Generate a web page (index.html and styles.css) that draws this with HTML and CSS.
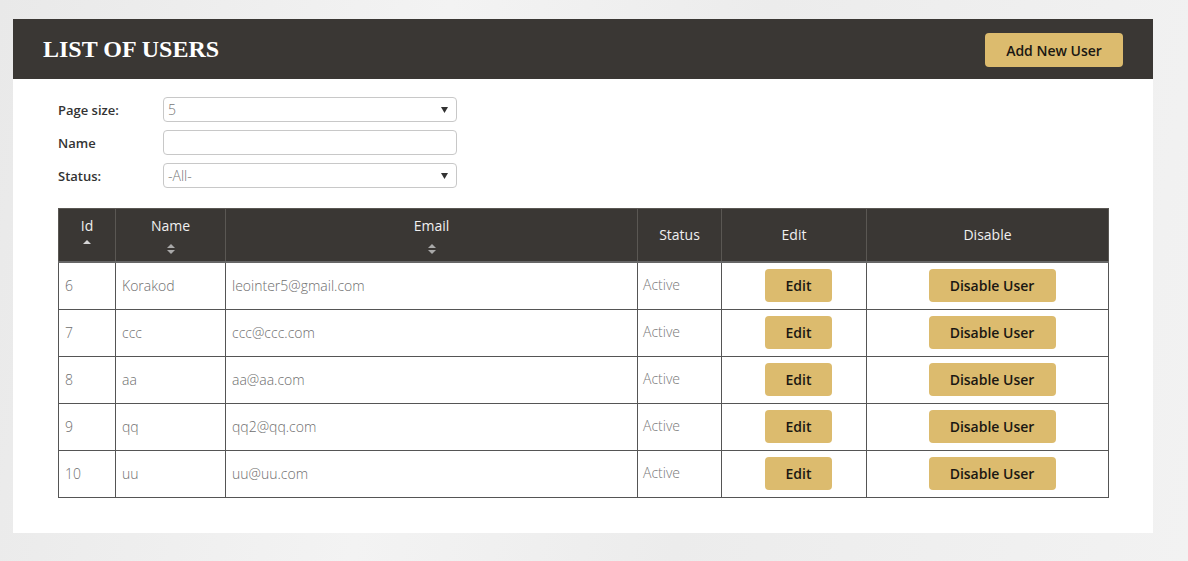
FILE: index.html
```html
<!DOCTYPE html>
<html>
<head>
<meta charset="utf-8">
<title>List of users</title>
<link rel="stylesheet" href="styles.css">
</head>
<body>
<div class="page">
  <div class="panel">
    <div class="panel-head">
      <h1 class="title">LIST OF USERS</h1>
      <button class="btn btn-add">Add New User</button>
    </div>
    <div class="panel-body">
      <div class="filters">
        <label class="f-label">Page size:</label>
        <div class="select-wrap">
          <div class="field">5</div>
          <svg class="caret" width="7" height="6" viewBox="0 0 7 6"><path d="M0 0H7L3.5 6Z" fill="#333"/></svg>
        </div>
        <label class="f-label">Name</label>
        <div class="field"></div>
        <label class="f-label">Status:</label>
        <div class="select-wrap">
          <div class="field">-All-</div>
          <svg class="caret" width="7" height="6" viewBox="0 0 7 6"><path d="M0 0H7L3.5 6Z" fill="#333"/></svg>
        </div>
      </div>

      <table class="users">
        <colgroup>
          <col style="width:57px"><col style="width:110px"><col style="width:412px"><col style="width:84px"><col style="width:145px"><col style="width:242px">
        </colgroup>
        <thead>
          <tr>
            <th><div class="th-text">Id</div><div class="sort"><svg class="asc" width="8" height="12" viewBox="0 0 8 12"><path d="M0 5H8L4 1Z" fill="#d6d6d6"/></svg></div></th>
            <th><div class="th-text">Name</div><div class="sort"><svg width="8" height="12" viewBox="0 0 8 12"><path d="M0 5H8L4 1Z M0 7H8L4 11Z" fill="#a9a9a9"/></svg></div></th>
            <th><div class="th-text">Email</div><div class="sort"><svg width="8" height="12" viewBox="0 0 8 12"><path d="M0 5H8L4 1Z M0 7H8L4 11Z" fill="#a9a9a9"/></svg></div></th>
            <th>Status</th>
            <th>Edit</th>
            <th>Disable</th>
          </tr>
        </thead>
        <tbody>
          <tr><td>6</td><td>Korakod</td><td>leointer5@gmail.com</td><td class="status">Active</td><td class="c"><button class="btn btn-edit">Edit</button></td><td class="c"><button class="btn btn-dis">Disable User</button></td></tr>
          <tr><td>7</td><td>ccc</td><td>ccc@ccc.com</td><td class="status">Active</td><td class="c"><button class="btn btn-edit">Edit</button></td><td class="c"><button class="btn btn-dis">Disable User</button></td></tr>
          <tr><td>8</td><td>aa</td><td>aa@aa.com</td><td class="status">Active</td><td class="c"><button class="btn btn-edit">Edit</button></td><td class="c"><button class="btn btn-dis">Disable User</button></td></tr>
          <tr><td>9</td><td>qq</td><td>qq2@qq.com</td><td class="status">Active</td><td class="c"><button class="btn btn-edit">Edit</button></td><td class="c"><button class="btn btn-dis">Disable User</button></td></tr>
          <tr><td>10</td><td>uu</td><td>uu@uu.com</td><td class="status">Active</td><td class="c"><button class="btn btn-edit">Edit</button></td><td class="c"><button class="btn btn-dis">Disable User</button></td></tr>
        </tbody>
      </table>
    </div>
  </div>
</div>
</body>
</html>
```

FILE: styles.css
```css
html, body {
  margin: 0;
  padding: 0;
}
body {
  font-family: "Open Sans", "Liberation Sans", sans-serif;
  background: linear-gradient(100deg, #e9e9e9 0%, #f3f3f3 35%, #ececec 60%, #f2f2f2 100%);
  min-height: 561px;
}
.page {
  padding: 19px 35px 28px 13px;
}
.panel {
  width: 1140px;
  background: #fff;
}
.panel-head {
  height: 60px;
  background: #3a3734;
  display: flex;
  align-items: center;
  justify-content: space-between;
  padding: 0 30px 0 30px;
}
.title {
  margin: 0;
  font-family: "Liberation Serif", "Times New Roman", serif;
  font-weight: bold;
  font-size: 24px;
  color: #fff;
}
.btn {
  font-family: "Open Sans", "Liberation Sans", sans-serif;
  font-weight: 550;
  font-size: 14px;
  color: #1a1712;
  background: #dcbb6e;
  border: none;
  border-radius: 4px;
  cursor: pointer;
  padding: 0;
}
.btn-add {
  width: 138px;
  height: 34px;
  margin-top: 2px;
}
.panel-body {
  padding: 18px 45px 35px 45px;
}
.filters {
  display: grid;
  grid-template-columns: 105px 294px;
  row-gap: 8px;
  align-items: center;
  margin-bottom: 20px;
}
.f-label {
  font-size: 13px;
  font-weight: 550;
  color: #333;
}
.select-wrap {
  position: relative;
}
.field {
  box-sizing: border-box;
  height: 25px;
  border: 1px solid #c8c8c8;
  border-radius: 4px;
  padding: 0 4px;
  font-size: 14px;
  font-weight: 300;
  color: #777;
  line-height: 23px;
}
.caret {
  position: absolute;
  right: 9px;
  top: 10px;
}
.users {
  width: 1050px;
  border-collapse: collapse;
  table-layout: fixed;
}
.users th {
  background: #3a3734;
  color: #f0f0f0;
  font-weight: 400;
  font-size: 14px;
  height: 52px;
  padding: 0;
  border: 1px solid #5a5753;
  border-bottom: 2px solid #666;
  text-align: center;
  vertical-align: middle;
  line-height: 20px;
}
.th-text {
  line-height: 20px;
}
.sort {
  height: 19px;
  display: flex;
  justify-content: center;
  align-items: flex-start;
}
.sort svg {
  display: block;
  margin-top: 7px;
}
.sort svg.asc {
  margin-top: 3px;
}
.users td {
  height: 47px;
  box-sizing: border-box;
  border: 1px solid #555;
  padding: 0 6px;
  font-size: 14px;
  font-weight: 300;
  color: #6e6e6e;
  vertical-align: middle;
}
.users td.status {
  vertical-align: top;
  padding-top: 12px;
  color: #777;
  padding-left: 5px;
}
.users td.c {
  text-align: center;
  padding: 0 7px 0 16px;
}
.btn-edit {
  width: 67px;
  height: 33px;
}
.btn-dis {
  width: 127px;
  height: 33px;
}
```
